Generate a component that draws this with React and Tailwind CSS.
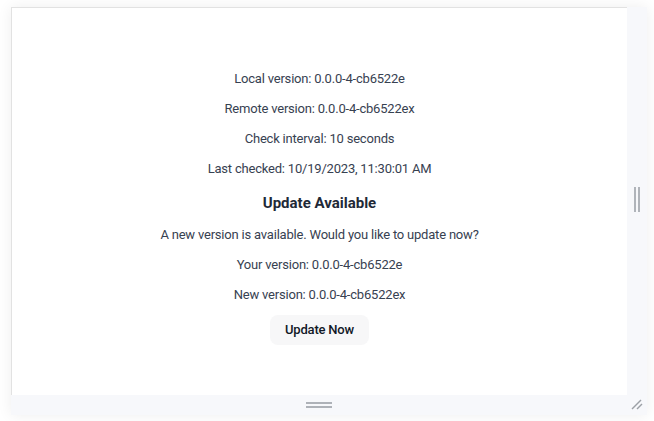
import React from "react";

export default function App() {
  const font = { fontFamily: "Roboto, 'Noto Sans', sans-serif" };
  return (
    <div className="w-[654px] h-[421px] bg-white overflow-hidden" style={font}>
      <div className="ml-[11px] mt-[7px] w-[636px] h-[408px] flex flex-col shadow-[0_0_14px_rgba(0,0,0,0.07)]">
        <div className="flex flex-1 min-h-0">
          <div className="w-[616px] bg-white border-l border-t border-[#e2e2e2] flex flex-col items-center pt-[61px] gap-[10px] text-[13px] leading-5 tracking-[-0.2px] text-[#374151]">
            <p>Local version: 0.0.0-4-cb6522e</p>
            <p>Remote version: 0.0.0-4-cb6522ex</p>
            <p>Check interval: 10 seconds</p>
            <p>Last checked: 10/19/2023, 11:30:01 AM</p>
            <h2 className="text-[15px] leading-6 font-bold tracking-normal text-[#1f2937] pt-[2px]">Update Available</h2>
            <p>A new version is available. Would you like to update now?</p>
            <p>Your version: 0.0.0-4-cb6522e</p>
            <p>New version: 0.0.0-4-cb6522ex</p>
            <button className="w-[99px] h-[30px] rounded-lg bg-[#f7f7f8] text-[13px] font-medium text-[#111827]">
              Update Now
            </button>
          </div>
          <div className="w-[20px] bg-[#f7f8fb] flex items-center justify-center pb-[3px]">
            <div className="flex gap-[2px]">
              <div className="w-[2px] h-[25px] bg-[#b0b4ba]" />
              <div className="w-[2px] h-[25px] bg-[#b0b4ba]" />
            </div>
          </div>
        </div>
        <div className="h-[20px] bg-[#f7f8fb] flex items-center relative">
          <div className="flex-1 flex justify-center">
            <div className="flex flex-col gap-[2px] mr-[20px]">
              <div className="w-[26px] h-[2px] bg-[#aeb2b8]" />
              <div className="w-[26px] h-[2px] bg-[#aeb2b8]" />
            </div>
          </div>
          <svg className="absolute right-[2px] bottom-[3px]" width="16" height="16" viewBox="0 0 16 16">
            <line x1="3" y1="13" x2="12" y2="4" stroke="#9ca0a6" strokeWidth="1.5" />
            <line x1="8" y1="13" x2="13" y2="8" stroke="#9ca0a6" strokeWidth="1.5" />
          </svg>
        </div>
      </div>
    </div>
  );
}
